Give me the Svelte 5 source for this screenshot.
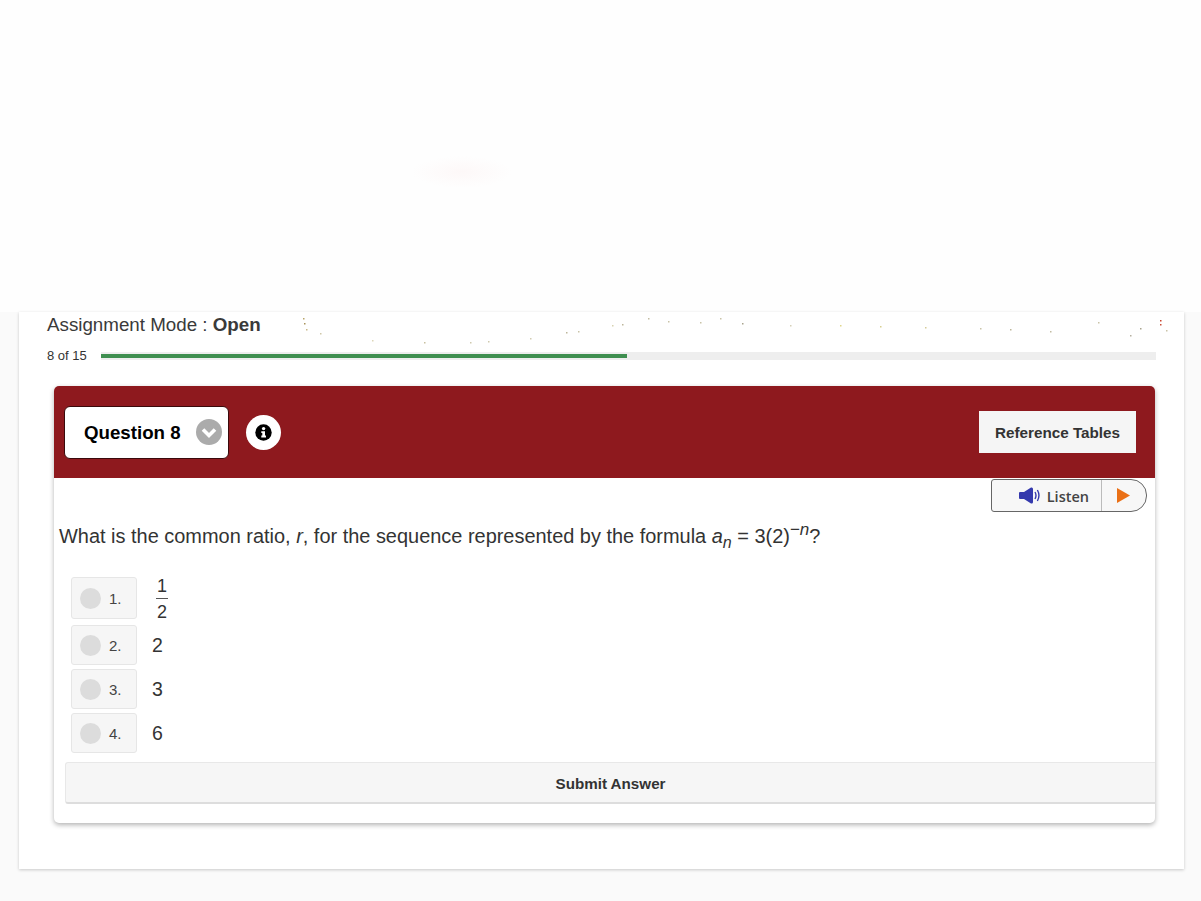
<script>
  const options = [
    { num: '1.', frac: ['1', '2'] },
    { num: '2.', value: '2' },
    { num: '3.', value: '3' },
    { num: '4.', value: '6' }
  ];

  // scanner-like specks along the top edge of the sheet
  const specks = [
    [303, 318, '#b9a56a'], [304, 323, '#a8925a'], [306, 329, '#c9b98a'], [320, 333, '#cfc7a8'], [372, 340, '#ddd6b8'],
    [424, 342, '#c8c0a0'], [470, 342, '#cfc9ae'], [488, 341, '#cfc9ae'], [530, 338, '#d2ccb2'], [566, 332, '#bdb69a'],
    [578, 331, '#c9c3a8'], [612, 325, '#d8d2b0'], [622, 324, '#bdb69a'], [648, 318, '#c2bca2'], [668, 321, '#c9c3a8'],
    [700, 322, '#c9c3a8'], [720, 318, '#c9c3a8'], [742, 323, '#a9a48e'], [790, 325, '#d5d0b8'], [840, 325, '#e0d68a'],
    [880, 326, '#d8cf90'], [925, 327, '#d5cc98'], [980, 328, '#c9c3a8'], [1010, 329, '#bdb69a'], [1050, 331, '#c2bca2'],
    [1098, 322, '#c9c3a8'], [1130, 335, '#b5b0a0'], [1140, 328, '#a9a48e'], [1160, 320, '#c9402a'], [1160, 324, '#c9503a'],
    [1166, 330, '#c9c3a8']
  ];
</script>

<div class="page">
  <div class="top-band"></div>

  <main class="sheet">
    <svg class="specks" width="1201" height="50" viewBox="0 300 1201 50" aria-hidden="true">
      {#each specks as s}
        <rect x={s[0]} y={s[1]} width="1.5" height="1.5" fill={s[2]} />
      {/each}
    </svg>

    <div class="mode">Assignment Mode : <strong>Open</strong></div>

    <div class="progress">
      <span class="progress-label">8 of 15</span>
      <div class="track"><div class="fill" style="width: 49.9%"></div></div>
    </div>

    <section class="panel">
      <header class="panel-head">
        <button type="button" class="question-select">
          <span>Question 8</span>
          <svg class="chevron" width="26" height="26" viewBox="0 0 26 26" aria-hidden="true">
            <circle cx="13" cy="13" r="13" fill="#ababab" />
            <path d="M7 10.5 13 16.5 19 10.5" fill="none" stroke="#fff" stroke-width="3.6" />
          </svg>
        </button>
        <div class="info">
          <svg width="17" height="17" viewBox="0 0 17 17" aria-hidden="true">
            <circle cx="8.5" cy="8.5" r="8.2" fill="#000" />
            <circle cx="8.6" cy="4.6" r="1.7" fill="#fff" />
            <path d="M6.3 7.2H10V11.6H11V13.4H6.3V11.6H7.3V9H6.3Z" fill="#fff" />
          </svg>
        </div>
        <button type="button" class="ref-btn">Reference Tables</button>
      </header>

      <div class="listen-row">
        <div class="listen">
          <span class="listen-main">
            <svg width="21" height="17" viewBox="0 0 21 17" aria-hidden="true">
              <path d="M0 6 Q0 5 1 5H5L12 .5Q14 0 14 2V15Q14 17 12 16.5L5 12H1Q0 12 0 11Z" fill="#3439ad" />
              <path d="M16 5Q18 8.5 16 12M18.4 3Q21.5 8.5 18.4 14" fill="none" stroke="#3439ad" stroke-width="1.4" />
            </svg>
            <span class="listen-text">Listen</span>
          </span>
          <span class="listen-play">
            <svg width="13" height="15" viewBox="0 0 13 15" aria-hidden="true">
              <path d="M0 0 13 7.5 0 15Z" fill="#ea7016" />
            </svg>
          </span>
        </div>
      </div>

      <p class="question">
        What is the common ratio, <i>r</i>, for the sequence represented by the formula
        <span class="math"><i>a<sub>n</sub></i> = 3(2)<sup>−<i>n</i></sup>?</span>
      </p>

      <div class="options">
        {#each options as opt}
          <div class="option" class:tall={opt.frac}>
            <div class="choice">
              <span class="radio"></span>
              <span class="num">{opt.num}</span>
            </div>
            {#if opt.frac}
              <span class="frac"><span>{opt.frac[0]}</span><span class="den">{opt.frac[1]}</span></span>
            {:else}
              <span class="value">{opt.value}</span>
            {/if}
          </div>
        {/each}
      </div>

      <button type="button" class="submit">Submit Answer</button>
    </section>
  </main>
</div>

<style>
  :global(body) {
    background: #fafafa;
    font-family: "Liberation Sans", Arial, sans-serif;
    color: #333;
  }

  .page {
    height: 901px;
    overflow: hidden;
  }

  .top-band {
    height: 312px;
    background: radial-gradient(ellipse 50px 16px at 462px 172px, #fdf8f8, #fefefe);
  }

  .sheet {
    position: relative;
    box-sizing: border-box;
    height: 557px;
    margin: 0 17px 0 19px;
    padding: 0 28px;
    background: #fff;
    box-shadow: 0 1px 3px rgba(0, 0, 0, 0.2);
  }

  .specks {
    position: absolute;
    left: -19px;
    top: -12px;
    pointer-events: none;
  }

  .mode {
    padding-top: 2px;
    font-size: 18.75px;
    line-height: 22px;
    color: #3a3a3a;
  }

  .progress {
    display: flex;
    align-items: center;
    gap: 14px;
    margin-top: 12px;
  }

  .progress-label {
    font-size: 13px;
    line-height: 16px;
    color: #333;
    width: 40px;
    white-space: nowrap;
  }

  .track {
    flex: 1;
    height: 8px;
    background: #eee;
    display: flex;
    align-items: center;
  }

  .fill {
    height: 4px;
    background: #3f8f50;
  }

  .panel {
    margin: 22px 1px 0 7px;
    height: 437px;
    display: flex;
    flex-direction: column;
    border-radius: 5px;
    background: #fff;
    box-shadow: 0 2px 5px rgba(0, 0, 0, 0.3);
  }

  .panel-head {
    display: flex;
    align-items: center;
    height: 92px;
    flex: none;
    padding: 0 19px 0 10px;
    background: #8e191e;
    border-radius: 5px 5px 0 0;
  }

  .question-select {
    display: flex;
    align-items: center;
    justify-content: space-between;
    box-sizing: border-box;
    width: 165px;
    height: 53px;
    padding: 0 6px 0 19px;
    background: #fff;
    border: 1px solid #3a0a0c;
    border-radius: 6px;
    font: bold 18.7px "Liberation Sans", Arial, sans-serif;
    color: #000;
  }

  .question-select span {
    padding-top: 2px;
  }

  .info {
    display: flex;
    align-items: center;
    justify-content: center;
    width: 35px;
    height: 35px;
    margin-left: 17px;
    border-radius: 50%;
    background: #fff;
  }

  .ref-btn {
    margin-left: auto;
    width: 157px;
    height: 42px;
    padding: 0;
    border: none;
    background: #f5f5f5;
    font: bold 15.25px "Liberation Sans", Arial, sans-serif;
    color: #333;
  }

  .listen-row {
    display: flex;
    justify-content: flex-end;
    padding: 1px 8px 0 0;
    flex: none;
  }

  .listen {
    display: flex;
    box-sizing: border-box;
    width: 156px;
    height: 33px;
    background: #f7f7f7;
    border: 1px solid #666;
    border-radius: 3px 16px 16px 3px;
  }

  .listen-main {
    display: flex;
    align-items: center;
    justify-content: flex-end;
    gap: 7px;
    width: 110px;
    padding-right: 12px;
    box-sizing: border-box;
    font: 600 14.5px "Open Sans", sans-serif;
    color: #444;
    border-right: 1px solid #bbb;
  }

  .listen-text {
    padding-top: 1px;
  }

  .listen-play {
    display: flex;
    align-items: center;
    padding-left: 15px;
  }

  .question {
    margin: 10px 0 0 5px;
    font-size: 19.94px;
    line-height: 28px;
    color: #333;
    white-space: nowrap;
  }

  .math sub {
    font-size: 16px;
    line-height: 0;
  }

  .math sup {
    font-size: 17px;
    line-height: 0;
  }

  .options {
    display: flex;
    flex-direction: column;
    gap: 4px;
    margin: 27px 0 0 17px;
  }

  .option {
    display: flex;
    align-items: center;
  }

  .option.tall {
    height: 42px;
    margin-bottom: 2px;
  }

  .choice {
    display: flex;
    align-items: center;
    box-sizing: border-box;
    width: 66px;
    height: 40px;
    padding-left: 8px;
    gap: 8px;
    background: #f6f6f6;
    border: 1px solid #e6e6e6;
    border-radius: 3px;
  }

  .option.tall .choice {
    height: 42px;
  }

  .radio {
    width: 21px;
    height: 21px;
    border-radius: 50%;
    background: #dcdcdc;
  }

  .num {
    font-size: 15px;
    color: #444;
  }

  .value {
    margin-left: 15px;
    font-size: 19.5px;
    color: #333;
  }

  .frac {
    display: flex;
    flex-direction: column;
    align-items: center;
    margin: 2px 0 0 19px;
    font-size: 18px;
    line-height: 24px;
    color: #333;
  }

  .den {
    border-top: 1px solid #555;
    padding-top: 1px;
    width: 12px;
    text-align: center;
  }

  .submit {
    flex: none;
    box-sizing: border-box;
    margin: 9px 0 0 11px;
    height: 42px;
    padding-top: 2px;
    background: #f6f6f6;
    border: 1px solid #e8e8e8;
    border-bottom: 2px solid #ddd;
    border-right: none;
    border-radius: 3px 0 0 3px;
    font: bold 15.2px "Liberation Sans", Arial, sans-serif;
    color: #333;
  }
</style>
